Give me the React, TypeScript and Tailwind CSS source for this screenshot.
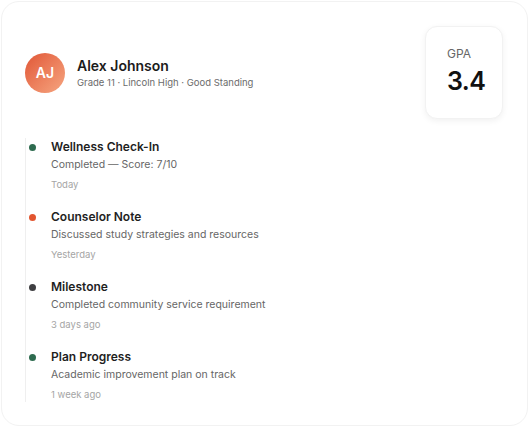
const events = [
  { title: 'Wellness Check-In', desc: 'Completed — Score: 7/10', when: 'Today', dot: 'bg-[#2e6b4f]' },
  { title: 'Counselor Note', desc: 'Discussed study strategies and resources', when: 'Yesterday', dot: 'bg-[#e2552f]' },
  { title: 'Milestone', desc: 'Completed community service requirement', when: '3 days ago', dot: 'bg-[#3f3f42]' },
  { title: 'Plan Progress', desc: 'Academic improvement plan on track', when: '1 week ago', dot: 'bg-[#2e6b4f]' },
];

const App = () => {
  return (
    <div className="min-h-screen bg-white p-px font-['Inter',sans-serif]">
      <div className="h-[425px] w-[527px] rounded-[18px] border border-[#f2f2f2] bg-white pl-[23px] pr-6 pt-6">
        <div className="flex items-center justify-between">
          <div className="flex items-center gap-3">
            <div className="flex h-10 w-10 items-center justify-center rounded-full bg-gradient-to-br from-[#e05535] to-[#f5a580] text-[14px] font-semibold text-white">
              AJ
            </div>
            <div>
              <p className="text-[14px] font-semibold leading-[19px] text-[#1c1c1c]">Alex Johnson</p>
              <p className="mt-[1px] text-[9.5px] leading-[14px] text-[#6b6b6b]">
                Grade 11 · Lincoln High · Good Standing
              </p>
            </div>
          </div>
          <div className="h-[93px] w-[78px] rounded-[12px] border border-[#f2f2f2] bg-white px-[21px] pt-[19px] shadow-[0_2px_6px_rgba(0,0,0,0.06)]">
            <p className="text-[12px] leading-[16px] text-[#666]">GPA</p>
            <p className="mt-[4px] text-[25px] font-semibold leading-[30px] tracking-[-0.5px] text-[#111]">3.4</p>
          </div>
        </div>

        <div className="mt-[19px] flex flex-col gap-4 border-l border-[#efefef]">
          {events.map((e) => (
            <div key={e.title} className="relative pl-[25px]">
              <span className={`absolute left-[3px] top-[6px] h-[7px] w-[7px] rounded-full ${e.dot}`} />
              <p className="text-[12px] font-semibold leading-[18px] text-[#1f1f1f]">{e.title}</p>
              <p className="text-[10.5px] leading-[18px] text-[#666]">{e.desc}</p>
              <p className="mt-[4px] text-[9.5px] leading-[14px] text-[#a5a5a5]">{e.when}</p>
            </div>
          ))}
        </div>
      </div>
    </div>
  );
};

export default App;
